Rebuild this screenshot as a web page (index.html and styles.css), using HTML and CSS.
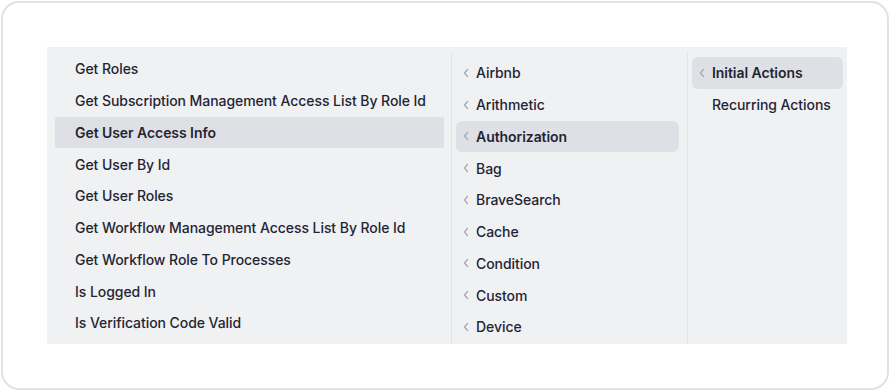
FILE: index.html
```html
<!DOCTYPE html>
<html lang="en">
<head>
    <meta charset="UTF-8">
    <meta name="viewport" content="width=device-width, initial-scale=1.0">
    <title>Function picker</title>
    <link rel="stylesheet" href="styles.css">
</head>
<body>
    <div class="card">
        <div class="picker">
            <div class="col col-functions">
                <div class="row">Get Roles</div>
                <div class="row">Get Subscription Management Access List By Role Id</div>
                <div class="row active">Get User Access Info</div>
                <div class="row">Get User By Id</div>
                <div class="row">Get User Roles</div>
                <div class="row">Get Workflow Management Access List By Role Id</div>
                <div class="row">Get Workflow Role To Processes</div>
                <div class="row">Is Logged In</div>
                <div class="row">Is Verification Code Valid</div>
            </div>

            <div class="col col-groups">
                <div class="row"><svg class="chev" viewBox="0 0 6 10"><polyline points="4.5,1.5 1.5,5 4.5,8.5"/></svg>Airbnb</div>
                <div class="row"><svg class="chev" viewBox="0 0 6 10"><polyline points="4.5,1.5 1.5,5 4.5,8.5"/></svg>Arithmetic</div>
                <div class="row active"><svg class="chev" viewBox="0 0 6 10"><polyline points="4.5,1.5 1.5,5 4.5,8.5"/></svg>Authorization</div>
                <div class="row"><svg class="chev" viewBox="0 0 6 10"><polyline points="4.5,1.5 1.5,5 4.5,8.5"/></svg>Bag</div>
                <div class="row"><svg class="chev" viewBox="0 0 6 10"><polyline points="4.5,1.5 1.5,5 4.5,8.5"/></svg>BraveSearch</div>
                <div class="row"><svg class="chev" viewBox="0 0 6 10"><polyline points="4.5,1.5 1.5,5 4.5,8.5"/></svg>Cache</div>
                <div class="row"><svg class="chev" viewBox="0 0 6 10"><polyline points="4.5,1.5 1.5,5 4.5,8.5"/></svg>Condition</div>
                <div class="row"><svg class="chev" viewBox="0 0 6 10"><polyline points="4.5,1.5 1.5,5 4.5,8.5"/></svg>Custom</div>
                <div class="row"><svg class="chev" viewBox="0 0 6 10"><polyline points="4.5,1.5 1.5,5 4.5,8.5"/></svg>Device</div>
            </div>

            <div class="col col-kinds">
                <div class="row active"><svg class="chev" viewBox="0 0 6 10"><polyline points="4.5,1.5 1.5,5 4.5,8.5"/></svg>Initial Actions</div>
                <div class="row"><span class="chev-space"></span>Recurring Actions</div>
            </div>
        </div>
    </div>
</body>
</html>
```

FILE: styles.css
```css
body {
    margin: 0;
    padding: 1px;
    background: #ffffff;
    font-family: Inter, "Noto Sans", sans-serif;
    color: #1f2533;
}
.card {
    width: 888px;
    height: 389px;
    box-sizing: border-box;
    border: 2px solid #e0e2e6;
    border-radius: 18px;
    padding: 44px 0 0 44px;
}
.picker {
    display: flex;
    width: 800px;
    height: 297px;
    padding-top: 6px;
    box-sizing: border-box;
    background: #f0f1f3;
    overflow: hidden;
}
.col {
    display: flex;
    flex-direction: column;
}
.col-functions {
    width: 404px;
    padding: 0 7px 0 8px;
    box-sizing: border-box;
}
.col-groups {
    width: 236px;
    padding: 4px 8px 0 4px;
    box-sizing: border-box;
    border-left: 1px solid #e1e3e7;
}
.col-kinds {
    width: 160px;
    padding: 4px 4px 0 4px;
    box-sizing: border-box;
    border-left: 1px solid #e1e3e7;
}
.row {
    display: flex;
    align-items: center;
    height: 31.75px;
    flex-shrink: 0;
    font-size: 14px;
    font-weight: 500;
    letter-spacing: -0.06px;
    white-space: nowrap;
}
.col-functions .row {
    padding-left: 20px;
}
.col-groups .row,
.col-kinds .row {
    padding-left: 7px;
    border-radius: 6px;
}
.row.active {
    background: #dfe0e5;
    font-weight: 600;
}
.col-functions .row.active {
    border-radius: 2px;
}
.chev {
    width: 6px;
    height: 10px;
    margin-right: 7px;
    fill: none;
    stroke: #a3a8b3;
    stroke-width: 1.2;
    stroke-linecap: round;
    stroke-linejoin: round;
}
.chev-space {
    width: 6px;
    margin-right: 7px;
}
```
